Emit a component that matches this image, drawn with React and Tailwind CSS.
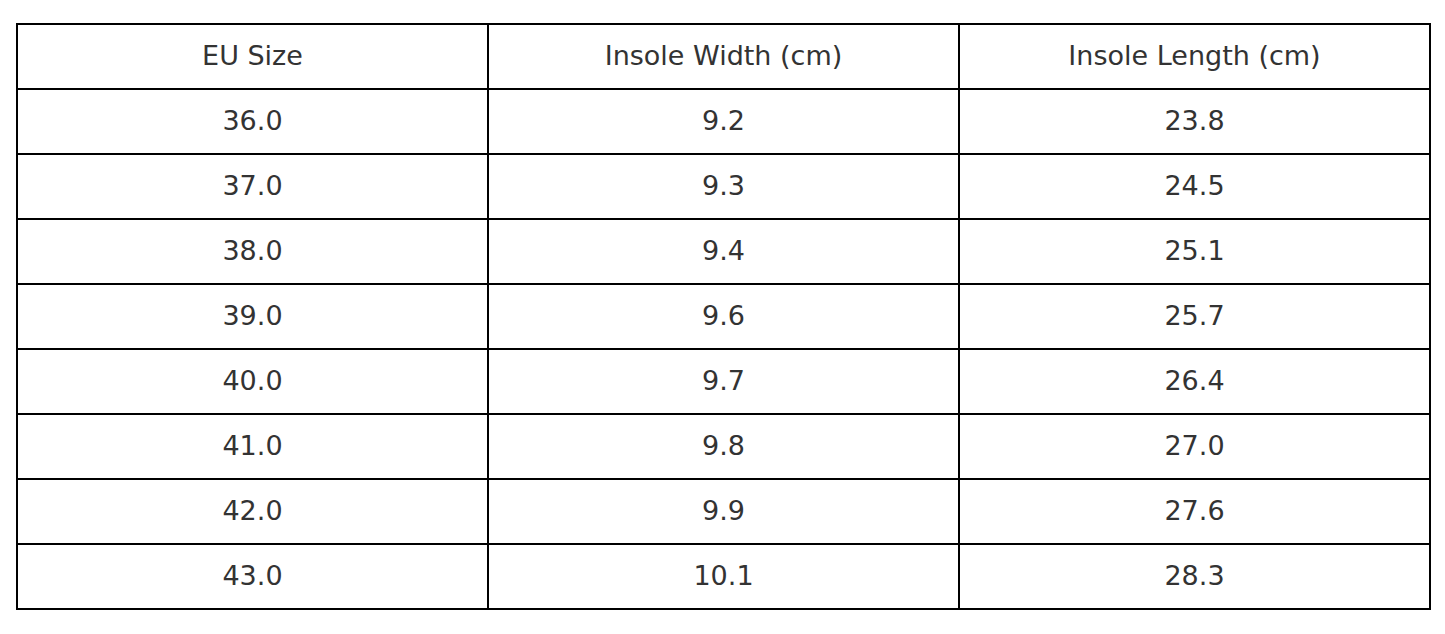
import React from 'react';

const rows = [
  ['36.0', '9.2', '23.8'],
  ['37.0', '9.3', '24.5'],
  ['38.0', '9.4', '25.1'],
  ['39.0', '9.6', '25.7'],
  ['40.0', '9.7', '26.4'],
  ['41.0', '9.8', '27.0'],
  ['42.0', '9.9', '27.6'],
  ['43.0', '10.1', '28.3'],
];

const cell = 'border-2 border-black h-[65px] text-center align-middle font-normal';

const App = () => {
  return (
    <div className="bg-white min-h-screen pl-4 pr-[14px] pt-[23px] text-[#333333] text-[27px]" style={{ fontFamily: '"DejaVu Sans", sans-serif' }}>
      <table className="w-full table-fixed border-collapse">
        <thead>
          <tr>
            <th className={cell}>EU Size</th>
            <th className={cell}>Insole Width (cm)</th>
            <th className={cell}>Insole Length (cm)</th>
          </tr>
        </thead>
        <tbody>
          {rows.map((r) => (
            <tr key={r[0]}>
              {r.map((v, i) => (
                <td key={i} className={cell}>{v}</td>
              ))}
            </tr>
          ))}
        </tbody>
      </table>
    </div>
  );
};

export default App;
